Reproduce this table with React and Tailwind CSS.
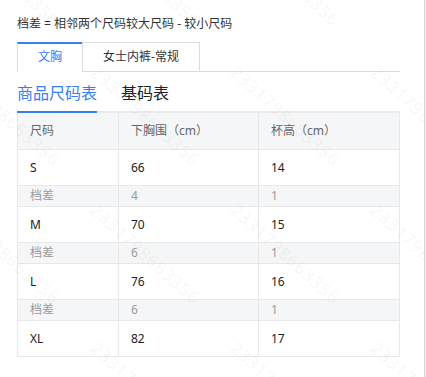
import React from 'react';

const rows = [
  { size: 'S', chest: '66', cup: '14' },
  { diff: true, chest: '4', cup: '1' },
  { size: 'M', chest: '70', cup: '15' },
  { diff: true, chest: '6', cup: '1' },
  { size: 'L', chest: '76', cup: '16' },
  { diff: true, chest: '6', cup: '1' },
  { size: 'XL', chest: '82', cup: '17' },
];

const marks = [];
[-78, 62, 200, 338].forEach((top) => {
  [-40, 100, 240, 380].forEach((left) => marks.push({ top, left }));
});

function Watermark() {
  return (
    <div className="pointer-events-none absolute inset-0 overflow-hidden">
      {marks.map((m, i) => (
        <span
          key={i}
          className="absolute origin-top-left rotate-[42deg] whitespace-nowrap text-[17px] leading-[20px] tracking-[1px] text-black/[0.055]"
          style={{ top: m.top, left: m.left }}
        >
          2331798663356
        </span>
      ))}
    </div>
  );
}

export default function App() {
  return (
    <div className="flex min-h-[377px] bg-white font-['Noto_Sans','Noto_Sans_CJK_SC',sans-serif]">
      <div className="relative w-[425px] shrink-0 overflow-hidden border-r border-[#d4d4d4] pl-[17px] pt-[17px]">
        <p className="text-[12px] leading-[14px] text-[#333]">档差 = 相邻两个尺码较大尺码 - 较小尺码</p>

        <div className="mt-[11px] flex w-[383px] border-b border-[#dcdcdc]">
          <div className="-mb-px flex h-[30px] w-[65px] items-center justify-center border-l border-t-2 border-l-[#dcdcdc] border-t-[#3a7ef6] bg-white pb-[2px] text-[12px] text-[#3a7ef6]">
            文胸
          </div>
          <div className="flex h-[29px] w-[118px] items-center justify-center border-l border-r border-t border-[#dcdcdc] text-[12px] text-[#333]">
            女士内裤-常规
          </div>
        </div>

        <div className="flex w-[383px] gap-[24px] border-b-2 border-[#ebebeb]">
          <div className="-mb-[2px] border-b-2 border-[#3a7ef6] pb-[7px] pt-[10px] text-[16px] leading-[22px] text-[#3a7ef6]">
            商品尺码表
          </div>
          <div className="pb-[7px] pt-[10px] text-[16px] leading-[22px] text-[#222]">基码表</div>
        </div>

        <div className="w-[383px] border-x border-[#e8e8e8] text-[12px]">
          <div className="grid h-[37px] grid-cols-[101px_140px_140px] border-b border-[#e8e8e8] bg-[#f5f6f8] text-[#666]">
            <div className="flex items-center border-r border-[#e8e8e8] px-3">尺码</div>
            <div className="flex items-center border-r border-[#e8e8e8] px-3">下胸围（cm）</div>
            <div className="flex items-center px-3">杯高（cm）</div>
          </div>
          {rows.map((r, i) =>
            r.diff ? (
              <div key={i} className="grid h-[21px] grid-cols-[101px_140px_140px] border-b border-[#e8e8e8] bg-[#f5f6f8] text-[#9a9a9a]">
                <div className="flex items-center border-r border-[#e8e8e8] px-3">档差</div>
                <div className="flex items-center border-r border-[#e8e8e8] px-3">{r.chest}</div>
                <div className="flex items-center px-3">{r.cup}</div>
              </div>
            ) : (
              <div key={i} className="grid h-[36px] grid-cols-[101px_140px_140px] border-b border-[#e8e8e8] bg-white text-[#222]">
                <div className="flex items-center border-r border-[#e8e8e8] px-3">{r.size}</div>
                <div className="flex items-center border-r border-[#e8e8e8] px-3">{r.chest}</div>
                <div className="flex items-center px-3">{r.cup}</div>
              </div>
            )
          )}
        </div>

        <Watermark />
      </div>
      <div className="flex-1 bg-[#f3f3f3]" />
    </div>
  );
}
